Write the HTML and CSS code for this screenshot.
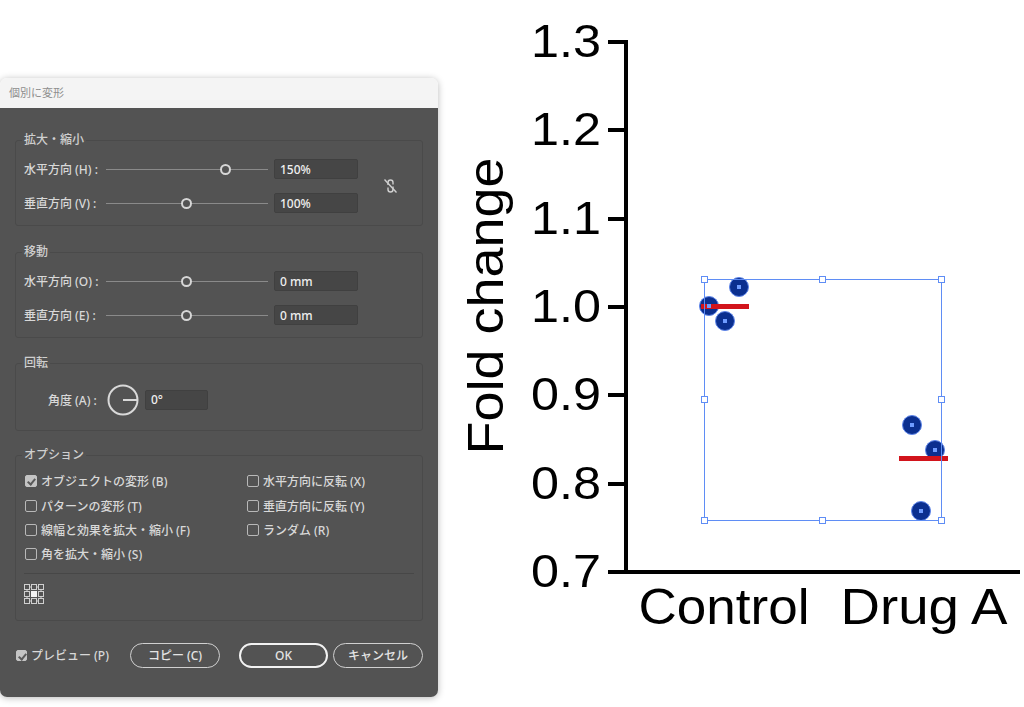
FILE: index.html
```html
<!DOCTYPE html>
<html lang="ja">
<head>
  <meta charset="UTF-8">
  <title>個別に変形</title>
  <link rel="stylesheet" href="styles.css">
</head>
<body>
  <div class="dialog">
    <div class="titlebar">個別に変形</div>
    <div class="panel">
      <!-- scale -->
      <fieldset class="group group-scale">
        <legend>拡大・縮小</legend>
        <div class="group-inner">
          <div class="rows">
            <div class="row">
              <span class="lbl">水平方向 (H) :</span>
              <div class="slider"><span class="knob" style="left: 74%"></span></div>
              <input class="field" type="text" value="150%">
            </div>
            <div class="row">
              <span class="lbl">垂直方向 (V) :</span>
              <div class="slider"><span class="knob" style="left: 50%"></span></div>
              <input class="field" type="text" value="100%">
            </div>
          </div>
          <span class="link-icon">
            <svg width="15" height="16" viewBox="0 0 15 16">
              <path d="M5 7 V4.5 a2.5 2.5 0 0 1 5 0 V6.5" fill="none" stroke="#cfcfcf" stroke-width="1.4"/>
              <path d="M5 9.5 V11.5 a2.5 2.5 0 0 0 5 0 V8.5" fill="none" stroke="#cfcfcf" stroke-width="1.4"/>
              <line x1="1.5" y1="1.5" x2="13.5" y2="14.5" stroke="#cfcfcf" stroke-width="1.4"/>
            </svg>
          </span>
        </div>
      </fieldset>

      <!-- move -->
      <fieldset class="group group-move">
        <legend>移動</legend>
        <div class="rows">
          <div class="row">
            <span class="lbl">水平方向 (O) :</span>
            <div class="slider"><span class="knob" style="left: 50%"></span></div>
            <input class="field" type="text" value="0 mm">
          </div>
          <div class="row">
            <span class="lbl">垂直方向 (E) :</span>
            <div class="slider"><span class="knob" style="left: 50%"></span></div>
            <input class="field" type="text" value="0 mm">
          </div>
        </div>
      </fieldset>

      <!-- rotate -->
      <fieldset class="group group-rotate">
        <legend>回転</legend>
        <div class="row row-angle">
          <span class="lbl-angle">角度 (A) :</span>
          <svg class="dial" width="32" height="32" viewBox="0 0 32 32">
            <circle cx="16" cy="16" r="14.5" fill="none" stroke="#d9d9d9" stroke-width="2"/>
            <line x1="16" y1="16" x2="30" y2="16" stroke="#d9d9d9" stroke-width="2"/>
          </svg>
          <input class="field field-angle" type="text" value="0°">
        </div>
      </fieldset>

      <!-- options -->
      <fieldset class="group group-options">
        <legend>オプション</legend>
        <div class="checks">
          <label class="check"><span class="box checked"></span>オブジェクトの変形 (B)</label>
          <label class="check"><span class="box"></span>水平方向に反転 (X)</label>
          <label class="check"><span class="box"></span>パターンの変形 (T)</label>
          <label class="check"><span class="box"></span>垂直方向に反転 (Y)</label>
          <label class="check"><span class="box"></span>線幅と効果を拡大・縮小 (F)</label>
          <label class="check"><span class="box"></span>ランダム (R)</label>
          <label class="check"><span class="box"></span>角を拡大・縮小 (S)</label>
        </div>
        <div class="sep"></div>
        <svg class="refpoint" width="20" height="20" viewBox="0 0 20 20">
          <g fill="none" stroke="#cfcfcf" stroke-width="1">
            <rect x="0.5" y="0.5" width="5" height="5"/>
            <rect x="7.5" y="0.5" width="5" height="5"/>
            <rect x="14.5" y="0.5" width="5" height="5"/>
            <rect x="0.5" y="7.5" width="5" height="5"/>
            <rect x="14.5" y="7.5" width="5" height="5"/>
            <rect x="0.5" y="14.5" width="5" height="5"/>
            <rect x="7.5" y="14.5" width="5" height="5"/>
            <rect x="14.5" y="14.5" width="5" height="5"/>
            <path d="M5.5 3 H7.5 M12.5 3 H14.5 M5.5 17 H7.5 M12.5 17 H14.5 M3 5.5 V7.5 M3 12.5 V14.5 M17 5.5 V7.5 M17 12.5 V14.5"/>
          </g>
          <rect x="7" y="7" width="6" height="6" fill="#f2f2f2"/>
        </svg>
      </fieldset>

      <div class="actions">
        <label class="preview"><span class="box checked"></span>プレビュー (P)</label>
        <button class="btn" type="button">コピー (C)</button>
        <button class="btn btn-ok" type="button">OK</button>
        <button class="btn btn-cancel" type="button">キャンセル</button>
      </div>
    </div>
  </div>

  <svg class="chart" width="584" height="707" viewBox="440 0 584 707">
    <g stroke="#000" stroke-width="4">
      <line x1="626" y1="40" x2="626" y2="574"/>
      <line x1="608" y1="572" x2="1020" y2="572"/>
      <line x1="608" y1="42" x2="626" y2="42"/>
      <line x1="608" y1="130" x2="626" y2="130"/>
      <line x1="608" y1="219" x2="626" y2="219"/>
      <line x1="608" y1="307" x2="626" y2="307"/>
      <line x1="608" y1="395" x2="626" y2="395"/>
      <line x1="608" y1="484" x2="626" y2="484"/>
    </g>
    <g class="ticklabels" text-anchor="end">
      <text x="601" y="57" textLength="70" lengthAdjust="spacingAndGlyphs">1.3</text>
      <text x="601" y="145" textLength="70" lengthAdjust="spacingAndGlyphs">1.2</text>
      <text x="601" y="234" textLength="70" lengthAdjust="spacingAndGlyphs">1.1</text>
      <text x="601" y="322" textLength="70" lengthAdjust="spacingAndGlyphs">1.0</text>
      <text x="601" y="410" textLength="70" lengthAdjust="spacingAndGlyphs">0.9</text>
      <text x="601" y="499" textLength="70" lengthAdjust="spacingAndGlyphs">0.8</text>
      <text x="601" y="587" textLength="70" lengthAdjust="spacingAndGlyphs">0.7</text>
    </g>
    <g class="catlabels" text-anchor="middle">
      <text x="724" y="624" textLength="171" lengthAdjust="spacingAndGlyphs">Control</text>
      <text x="924" y="624" textLength="167" lengthAdjust="spacingAndGlyphs">Drug A</text>
    </g>
    <text class="ytitle" transform="translate(503 306) rotate(-90)" text-anchor="middle" textLength="297" lengthAdjust="spacingAndGlyphs">Fold change</text>

    <!-- points -->
    <g class="pts">
      <circle cx="739" cy="287" r="9.5"/>
      <circle cx="709" cy="306" r="9.5"/>
      <circle cx="725" cy="321" r="9.5"/>
      <circle cx="912" cy="425" r="9.5"/>
      <circle cx="935" cy="450" r="9.5"/>
      <circle cx="921" cy="511" r="9.5"/>
    </g>

    <!-- medians -->
    <g fill="#d2141c">
      <rect x="701" y="304" width="48" height="5"/>
      <rect x="899" y="456" width="49" height="5"/>
    </g>

    <!-- anchor points -->
    <g fill="#6f9cff">
      <rect x="737" y="285" width="4" height="4"/>
      <rect x="707" y="304" width="4" height="4"/>
      <rect x="723" y="319" width="4" height="4"/>
      <rect x="910" y="423" width="4" height="4"/>
      <rect x="933" y="448" width="4" height="4"/>
      <rect x="919" y="509" width="4" height="4"/>
    </g>

    <!-- selection -->
    <rect x="704.5" y="279.5" width="237" height="241" fill="none" stroke="#5f8df5" stroke-width="1"/>
    <g fill="#fff" stroke="#5f8df5" stroke-width="1">
      <rect x="701.5" y="276.5" width="6" height="6"/>
      <rect x="819.5" y="276.5" width="6" height="6"/>
      <rect x="938.5" y="276.5" width="6" height="6"/>
      <rect x="701.5" y="396.5" width="6" height="6"/>
      <rect x="938.5" y="396.5" width="6" height="6"/>
      <rect x="701.5" y="517.5" width="6" height="6"/>
      <rect x="819.5" y="517.5" width="6" height="6"/>
      <rect x="938.5" y="517.5" width="6" height="6"/>
    </g>
  </svg>
</body>
</html>
```

FILE: styles.css
```css
/* page */
body {
  margin: 0;
  background: #ffffff;
  display: flex;
  align-items: flex-start;
  font-family: "Noto Sans", "Noto Sans CJK JP", sans-serif;
}

/* dialog */
.dialog {
  width: 438px;
  margin-top: 78px;
  border-radius: 7px;
  overflow: hidden;
  box-shadow: 0 1px 7px rgba(0, 0, 0, 0.28);
}

.titlebar {
  height: 30px;
  line-height: 30px;
  padding-left: 9px;
  background: #f4f4f4;
  color: #8e8e8e;
  font-size: 11px;
}

.panel {
  background: #535353;
  padding: 25px 0 29px;
  color: #d8d8d8;
  font-size: 12px;
  font-weight: 500;
}

.group {
  margin: 0 15px 17px;
  padding: 12px 8px 12px;
  border: 1px solid #4a4a4a;
  border-radius: 3px;
  min-width: 0;
}

.group-scale {
  margin-bottom: 19px;
}

.group-move {
  margin-bottom: 18px;
}

.group legend {
  padding: 0 2px;
  margin-left: -2px;
  line-height: 14px;
  color: #cfcfcf;
}

.group-inner {
  display: flex;
  align-items: center;
}

.rows {
  display: flex;
  flex-direction: column;
  gap: 14px;
}

.row {
  display: flex;
  align-items: center;
  height: 20px;
}

.lbl {
  flex: 0 0 82px;
  white-space: nowrap;
}

.slider {
  position: relative;
  width: 162px;
  height: 1px;
  margin-right: 6px;
  background: #8a8a8a;
}

.knob {
  position: absolute;
  top: -5px;
  width: 11px;
  height: 11px;
  margin-left: -6px;
  box-sizing: border-box;
  border: 2px solid #d6d6d6;
  border-radius: 50%;
  background: #535353;
}

.field {
  width: 84px;
  height: 20px;
  box-sizing: border-box;
  padding: 0 5px;
  border: 1px solid #404040;
  border-radius: 2px;
  background: #464646;
  color: #efefef;
  font-family: inherit;
  font-size: 12px;
  font-weight: 500;
}

.link-icon {
  display: flex;
  margin-left: 25px;
}

.group-rotate {
  padding-top: 14px;
  padding-bottom: 15px;
}

.row-angle {
  height: 31px;
  padding-left: 24px;
}

.lbl-angle {
  flex: 0 0 56px;
  margin-right: 3px;
  white-space: nowrap;
}

.dial {
  display: block;
}

.field-angle {
  width: 63px;
  margin-left: 6px;
}

/* options */
.group-options {
  padding-top: 7px;
  padding-bottom: 16px;
  margin-bottom: 0;
}

.checks {
  display: grid;
  grid-template-columns: 222px 1fr;
  grid-auto-rows: 24.4px;
  padding-left: 1px;
}

.check,
.preview {
  display: flex;
  align-items: center;
  white-space: nowrap;
}

.box {
  width: 12px;
  height: 12px;
  box-sizing: border-box;
  margin-right: 4px;
  border: 1px solid #b8b8b8;
  border-radius: 2px;
}

.box.checked {
  background: #c4c4c4;
  border-color: #c4c4c4;
  position: relative;
}

.box.checked::after {
  content: "";
  position: absolute;
  left: 3px;
  top: 1px;
  width: 3px;
  height: 6px;
  border: solid #5a5a5a;
  border-width: 0 2px 2px 0;
  transform: rotate(40deg);
}

.sep {
  height: 1px;
  margin-top: 6px;
  background: #474747;
}

.refpoint {
  display: block;
  margin-top: 10px;
}

/* buttons */
.actions {
  display: flex;
  align-items: center;
  margin-top: 22px;
  padding-left: 16px;
}

.preview {
  flex: 0 0 114px;
}

.preview .box {
  width: 11px;
  height: 11px;
}

.btn {
  width: 90px;
  height: 25px;
  padding: 0;
  border: 1.5px solid #d0d0d0;
  border-radius: 13px;
  background: transparent;
  color: #e4e4e4;
  font-family: inherit;
  font-size: 12px;
  font-weight: 500;
}

.btn-ok {
  width: 89px;
  margin-left: 19px;
  border: 2px solid #f2f2f2;
}

.btn-cancel {
  margin-left: 5px;
}

/* chart */
.chart {
  display: block;
  margin-left: 2px;
  font-family: "Liberation Sans", Arial, sans-serif;
}

.ticklabels text {
  font-size: 46px;
}

.catlabels text {
  font-size: 50px;
}

.ytitle {
  font-size: 50px;
}

.pts circle {
  fill: #0b2f8f;
  stroke: #5f86ea;
  stroke-width: 1;
}
```
